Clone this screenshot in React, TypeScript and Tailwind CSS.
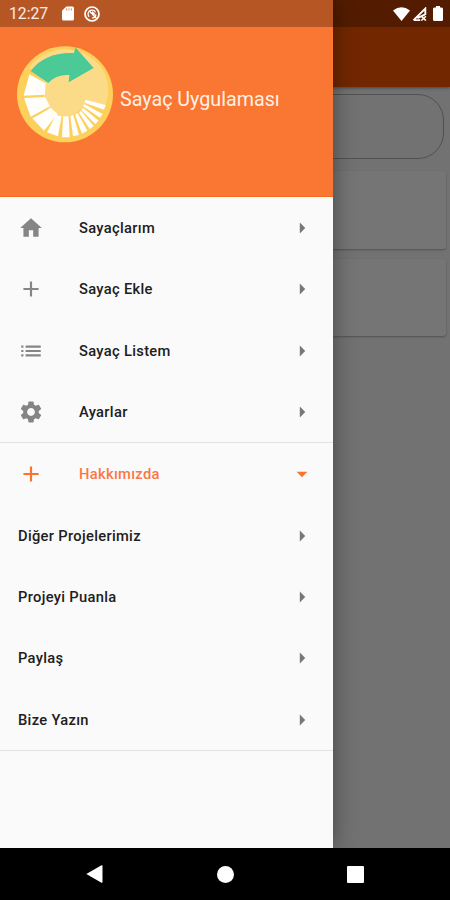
import type { IconType } from "react-icons";
import { MdAdd, MdArrowDropDown, MdArrowRight, MdHome, MdList, MdSettings } from "react-icons/md";

interface MenuItem {
  label: string;
  icon?: IconType;
  active?: boolean;
}

const mainItems: MenuItem[] = [
  { label: "Sayaçlarım", icon: MdHome },
  { label: "Sayaç Ekle", icon: MdAdd },
  { label: "Sayaç Listem", icon: MdList },
  { label: "Ayarlar", icon: MdSettings },
];

const aboutItems: MenuItem[] = [
  { label: "Hakkımızda", icon: MdAdd, active: true },
  { label: "Diğer Projelerimiz" },
  { label: "Projeyi Puanla" },
  { label: "Paylaş" },
  { label: "Bize Yazın" },
];

const logoSegments = [
  "88,222 137,249 135,283 71,286",
  "72,293 135,290 150,318 92,349",
  "97,354 120,342 152,322 173,341 132,391",
  "141,396 168,344 185,348 174,408",
  "186,411 189,348 206,348 209,411",
  "219,408 211,347 220,344 237,404",
  "246,400 225,343 233,338 262,391",
  "269,386 237,337 243,331 281,377",
  "286,371 244,329 249,322 296,361",
  "300,352 249,318 253,311 308,341",
  "312,328 253,307 257,298 317,314",
];

function Logo() {
  return (
    <svg viewBox="48 137 294 294" className="size-[98px] shrink-0">
      <circle cx="195" cy="282" r="144" fill="#fcd05a" />
      <path d="M88 202A133 133 0 0 1 313 217A133 133 0 0 1 317 314L257 298L206 348L135 290L137 249Z" fill="#fbdb88" />
      <circle cx="195" cy="284" r="64" fill="#fbdb88" />
      <path d="M92 212C120 174 165 155 222 158L226 141L281 203L206 246L208 224C184 222 161 230 145 248Z" fill="#4bca97" />
      {logoSegments.map((points) => (
        <polygon key={points} points={points} fill="#fffefa" />
      ))}
    </svg>
  );
}

function StatusBar() {
  return (
    <div className="absolute inset-x-0 top-0 flex h-[27px] items-center bg-black/27 pl-[9px] pr-[7px] text-white">
      <span className="w-[53px] pt-px text-[15.7px] leading-none text-white/90">12:27</span>
      <svg viewBox="0 0 12 15" className="h-[15px] w-[12px]" fill="currentColor">
        <path d="M4.3 0.5H10.5Q12 0.5 12 2V13Q12 14.5 10.5 14.5H1.5Q0 14.5 0 13V4.8Z" />
        <path d="M4.6 2.3V4.6M7 2.3V4.6M9.4 2.3V4.6" stroke="#d89a78" strokeWidth="1.1" />
      </svg>
      <svg viewBox="0 0 16 16" className="ml-[10px] size-4" fill="none" stroke="currentColor">
        <circle cx="8" cy="8" r="7" strokeWidth="1.7" />
        <path d="M5.2 10.8A4 4 0 0 1 5.3 5.1A4 4 0 0 1 11.5 6.2M11.9 8.4A4 4 0 0 1 8.2 12" strokeWidth="1.3" />
        <path d="M5.3 5.1L12.6 12.4M8 8.4L8.6 6.3L11 8.6" strokeWidth="1.4" />
      </svg>
      <svg viewBox="0 0 17 14" className="ml-auto h-[14px] w-[17px]" fill="currentColor">
        <path d="M0 3.4Q8.5 -2.8 17 3.4L8.5 14Z" />
      </svg>
      <svg viewBox="0 0 15 14" className="ml-[2px] h-[14px] w-[15px]" fill="none" stroke="currentColor">
        <path d="M1.6 13.1L13.3 1.6V8M1.6 13.1H8.2M5.4 11.2L12.8 7.6" strokeWidth="1.9" />
        <path d="M9.3 9.3L13.9 13.6M13.9 9.3L9.3 13.6" strokeWidth="1.5" />
      </svg>
      <svg viewBox="0 0 10 15" className="ml-[6px] h-[15px] w-[10px]" fill="currentColor">
        <path d="M3 0H7V1.5H8.6Q10 1.5 10 3V13.5Q10 15 8.6 15H1.4Q0 15 0 13.5V3Q0 1.5 1.4 1.5H3Z" />
      </svg>
    </div>
  );
}

function Row({ label, icon: Icon, active }: MenuItem) {
  const Arrow = active ? MdArrowDropDown : MdArrowRight;

  return (
    <li className="flex h-[61.3px] items-center pl-[18px] pr-[18px] pt-px">
      {Icon && (
        <span className="mr-[35px] flex w-[26px] shrink-0 justify-center">
          <Icon className={`size-[26px] ${active ? "text-[#f97430]" : "text-[#858585]"}`} />
        </span>
      )}
      <span
        className={`flex-1 text-[14.7px] font-medium tracking-[0.32px] ${active ? "text-[#f97845]" : "text-[#202020]"}`}
      >
        {label}
      </span>
      <Arrow className={`size-[26px] shrink-0 ${active ? "text-[#f97430]" : "text-[#777777]"}`} />
    </li>
  );
}

function Drawer() {
  return (
    <aside className="absolute left-0 top-0 flex h-[848px] w-[333px] flex-col bg-[#fafafa] shadow-[0_0_22px_rgba(0,0,0,0.4)]">
      <header className="flex h-[197px] shrink-0 items-start border-b border-[#f26d22] bg-[#fa7733] pl-4 pt-[45.5px]">
        <Logo />
        <h1 className="ml-[6px] mt-[41px] text-[19.7px] leading-[26px] text-[#fff0e4]">Sayaç Uygulaması</h1>
      </header>
      <ul className="border-b border-[#e2e2e2]">
        {mainItems.map((item) => (
          <Row key={item.label} {...item} />
        ))}
      </ul>
      <ul className="border-b border-[#e2e2e2]">
        {aboutItems.map((item) => (
          <Row key={item.label} {...item} />
        ))}
      </ul>
    </aside>
  );
}

function NavigationBar() {
  return (
    <nav className="flex h-[52px] items-center justify-between bg-black pl-[86px] pr-[86px] text-white">
      <svg viewBox="0 0 17 18" className="h-[18px] w-[17px]" fill="currentColor">
        <path d="M0.3 9L15.5 0.3Q16.5 0 16.5 1V17Q16.5 18 15.5 17.7Z" />
      </svg>
      <span className="size-[17px] rounded-full bg-white" />
      <span className="size-[17px] rounded-[1px] bg-white" />
    </nav>
  );
}

export default function App() {
  return (
    <div className="relative flex h-[900px] w-[450px] flex-col overflow-hidden bg-black font-['Roboto',sans-serif]">
      <main className="flex-1 bg-[#727272]">
        <div className="h-[87px] bg-[#722700] shadow-[0_1px_3px_rgba(0,0,0,0.4)]" />
        <div className="ml-[7px] mr-[6px] mt-[7px] h-[65px] rounded-[26px] border border-[#515151]" />
        <div className="mx-1 mt-3 h-[78px] rounded-[3px] bg-[#757575] shadow-[0_1px_2px_rgba(0,0,0,0.28)]" />
        <div className="mx-1 mt-[10px] h-[77px] rounded-[3px] bg-[#757575] shadow-[0_1px_2px_rgba(0,0,0,0.28)]" />
      </main>
      <NavigationBar />
      <Drawer />
      <StatusBar />
    </div>
  );
}
